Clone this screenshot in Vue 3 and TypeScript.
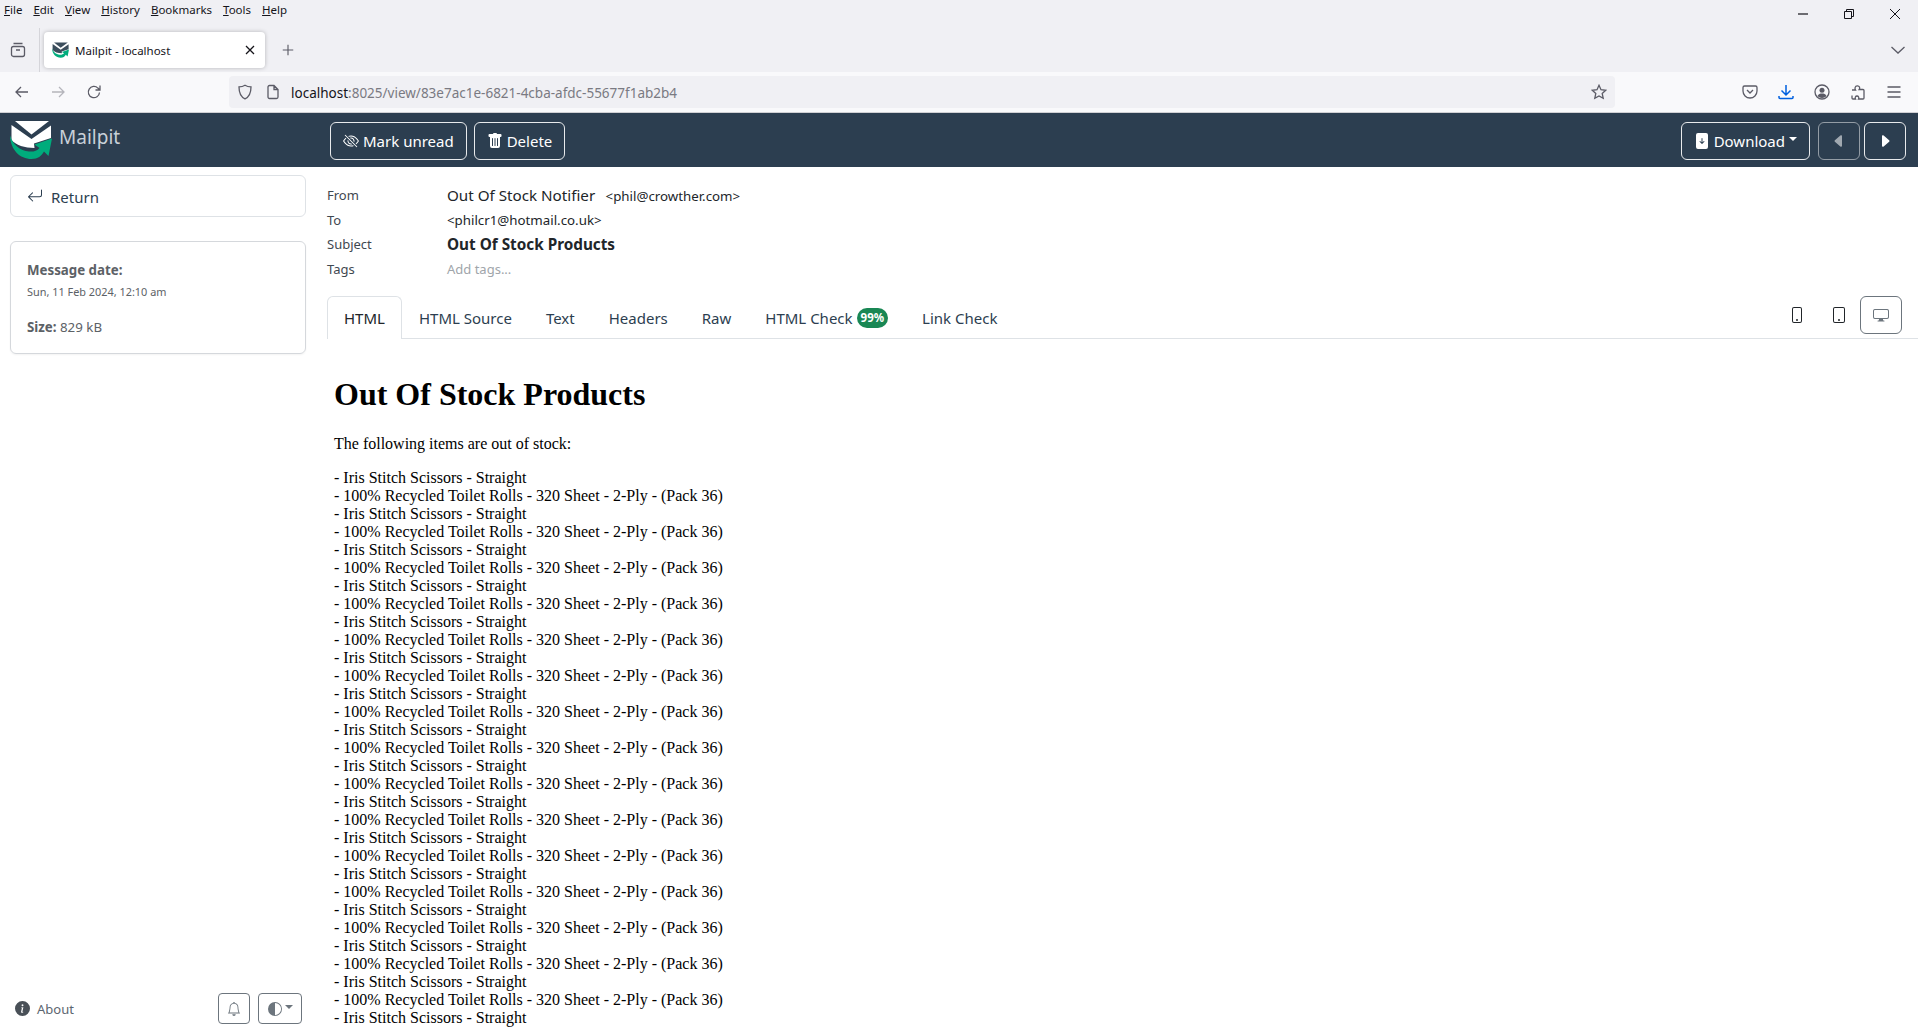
<template>
  <div class="page">
    <!-- browser chrome -->
    <div class="browser">
      <div class="menu-row">
        <nav class="menu">
          <span v-for="m in menus" :key="m.rest"><u>{{ m.key }}</u>{{ m.rest }}</span>
        </nav>
        <div class="win-ctrl">
          <svg viewBox="0 0 12 12"><path d="M1 6h10" stroke-width="1.2"/></svg>
          <svg viewBox="0 0 12 12"><path d="M1.5 3.5h7v7h-7zM3.5 3.5v-2h7v7h-2"/></svg>
          <svg viewBox="0 0 12 12"><path d="M1 1l10 10M11 1L1 11"/></svg>
        </div>
      </div>
      <div class="tab-row">
        <button class="chrome-icon first" type="button" aria-label="Firefox View">
          <svg viewBox="0 0 16 16"><rect x="1.5" y="4.5" width="13" height="10" rx="2"/><path d="M3.5 1.5h9M6 8h4"/></svg>
        </button>
        <div class="tab-sep"></div>
        <div class="tab">
          <svg class="favicon" viewBox="5 5 42 42"><use href="#mp-logo"/></svg>
          <span class="tab-title">Mailpit - localhost</span>
          <svg class="tab-close" viewBox="0 0 12 12"><path d="M2 2l8 8M10 2l-8 8"/></svg>
        </div>
        <svg class="new-tab" viewBox="0 0 16 16"><path d="M8 2v12M2 8h12"/></svg>
        <svg class="all-tabs" viewBox="0 0 16 16"><path d="M1.5 5l6.5 6 6.5-6"/></svg>
      </div>
      <div class="nav-row">
        <div class="nav-left">
          <svg viewBox="0 0 16 16"><path d="M14 8H2.5M7 3L2 8l5 5"/></svg>
          <svg class="off" viewBox="0 0 16 16"><path d="M2 8h11.5M9 3l5 5-5 5"/></svg>
          <svg viewBox="0 0 16 16"><path d="M13.5 8.5a5.6 5.6 0 1 1-1.6-4.4L14 6M14 1.5V6H9.5"/></svg>
        </div>
        <div class="url-bar">
          <svg class="shield" viewBox="0 0 16 16"><path d="M8 1.2c2 1.2 3.9 1.6 6 1.7 0 6-1.6 9.800-6 11.900C3.600 12.700 2 8.900 2 2.900c2.100-.1 4-.5 6-1.700z"/></svg>
          <svg class="page-ic" viewBox="0 0 16 16"><path d="M3 3a1.500 1.500 0 0 1 1.500-1.500H9L13 5.500V13a1.500 1.500 0 0 1-1.500 1.500h-7A1.500 1.500 0 0 1 3 13zM9 1.500v4h4"/></svg>
          <span class="url"><span class="host">localhost</span>:8025/view/83e7ac1e-6821-4cba-afdc-55677f1ab2b4</span>
          <svg class="star" viewBox="0 0 16 16"><path d="M8 1.300l2 4.400 4.700.6-3.500 3.200 1 4.800L8 11.900l-4.200 2.400 1-4.800-3.500-3.200 4.700-.6z"/></svg>
        </div>
        <div class="nav-right">
          <svg viewBox="0 0 16 16"><path d="M2.500 2h11A1.500 1.500 0 0 1 15 3.500V7a7 7 0 0 1-14 0V3.500A1.500 1.500 0 0 1 2.500 2zM5 6l3 3 3-3"/></svg>
          <svg class="dl" viewBox="0 0 16 16"><path d="M8 1v10M3.500 6.500L8 11l4.500-4.500M1 12v1.500a1 1 0 0 0 1 1h12a1 1 0 0 0 1-1V12"/></svg>
          <svg viewBox="0 0 16 16"><circle cx="8" cy="8" r="7"/><circle class="solid" cx="8" cy="6.300" r="2.500"/><path class="solid" d="M3.500 12c1-2 2.500-2.500 4.500-2.500s3.500.5 4.500 2.500c-1.200 1.300-2.700 2-4.500 2s-3.300-.7-4.500-2z"/></svg>
          <svg viewBox="0 0 16 16"><path d="M2 6h3.500c-1-1.500-.5-4 1.700-4.200C9.500 1.600 10.300 4 9.200 5.500H13a1 1 0 0 1 1 1V14a1 1 0 0 1-1 1H8.500c.8-1.500 0-3-1.500-3s-2.300 1.500-1.500 3H3a1 1 0 0 1-1-1v-2.500"/></svg>
          <svg viewBox="0 0 16 16"><path d="M1.500 3h13M1.500 8h13M1.500 13h13"/></svg>
        </div>
      </div>
    </div>

    <!-- shared logo -->
    <svg class="defs" aria-hidden="true">
      <defs>
        <g id="mp-logo">
          <path d="M10 6H44L26.500 19.500z" fill="currentColor"/>
          <path d="M6.500 10L26.500 24 46 10.500V23L29 28.500 29.500 33C20 33 10.500 30 6.500 25z" fill="currentColor"/>
          <path d="M5 20.500C5.500 35 15 44 26.500 44 33 44 36.500 41 39 36.500L43.500 41 47 23.500 29.500 29.500 34.500 33C32 36 28 37 24 36.500 15 36 7.500 29 5 20.500z" fill="#00ac7c"/>
        </g>
      </defs>
    </svg>

    <!-- app navbar -->
    <header class="navbar">
      <div class="brand">
        <svg class="brand-logo" viewBox="0 0 50 50"><use href="#mp-logo"/></svg>
        <span class="brand-name">Mailpit</span>
      </div>
      <div class="nav-actions">
        <button class="btn-outline" type="button">
          <svg viewBox="0 0 16 16" fill="currentColor"><path d="M13.359 11.238C15.060 9.720 16 8 16 8s-3-5.500-8-5.500a7.028 7.028 0 0 0-2.790.588l.770.771A5.944 5.944 0 0 1 8 3.500c2.120 0 3.879 1.168 5.168 2.457A13.134 13.134 0 0 1 14.828 8c-.058.087-.122.183-.195.288-.335.480-.830 1.120-1.465 1.755-.165.165-.337.328-.517.486l.708.709z"/><path d="M11.297 9.176a3.500 3.500 0 0 0-4.474-4.474l.823.823a2.500 2.500 0 0 1 2.829 2.829l.822.822zm-2.943 1.299.822.822a3.500 3.500 0 0 1-4.474-4.474l.823.823a2.500 2.500 0 0 0 2.829 2.829z"/><path d="M3.350 5.470c-.180.160-.353.322-.518.487A13.134 13.134 0 0 0 1.172 8l.195.288c.335.480.830 1.120 1.465 1.755C4.121 11.332 5.881 12.500 8 12.500c.716 0 1.390-.133 2.020-.360l.770.772A7.029 7.029 0 0 1 8 13.500C3 13.500 0 8 0 8s.939-1.721 2.641-3.238l.708.709zm10.296 8.884-12-12 .708-.708 12 12-.708.708z"/></svg>
          Mark unread
        </button>
        <button class="btn-outline" type="button">
          <svg viewBox="0 0 16 16" fill="currentColor"><path d="M2.500 1a1 1 0 0 0-1 1v1a1 1 0 0 0 1 1H3v9a2 2 0 0 0 2 2h6a2 2 0 0 0 2-2V4h.5a1 1 0 0 0 1-1V2a1 1 0 0 0-1-1H10a1 1 0 0 0-1-1H7a1 1 0 0 0-1 1H2.500zm3 4a.5.5 0 0 1 .5.5v7a.5.5 0 0 1-1 0v-7a.5.5 0 0 1 .5-.5zM8 5a.5.5 0 0 1 .5.5v7a.5.5 0 0 1-1 0v-7A.5.5 0 0 1 8 5zm3 .5v7a.5.5 0 0 1-1 0v-7a.5.5 0 0 1 1 0z"/></svg>
          Delete
        </button>
      </div>
      <div class="nav-end">
        <button class="btn-outline download" type="button">
          <svg viewBox="0 0 16 16" fill="currentColor"><path d="M12 0H4a2 2 0 0 0-2 2v12a2 2 0 0 0 2 2h8a2 2 0 0 0 2-2V2a2 2 0 0 0-2-2zM8 5a.5.5 0 0 1 .5.5v3.793l1.146-1.147a.5.5 0 0 1 .708.708l-2 2a.5.5 0 0 1-.708 0l-2-2a.5.5 0 1 1 .708-.708L7.500 9.293V5.500A.5.5 0 0 1 8 5z"/></svg>
          Download<i class="caret"></i>
        </button>
        <button class="btn-outline square dim" type="button" aria-label="Previous">
          <svg viewBox="0 0 16 16" fill="currentColor"><path d="m3.860 8.753 5.482 4.796c.646.566 1.658.106 1.658-.753V3.204a1 1 0 0 0-1.659-.753l-5.480 4.796a1 1 0 0 0 0 1.506z"/></svg>
        </button>
        <button class="btn-outline square" type="button" aria-label="Next">
          <svg viewBox="0 0 16 16" fill="currentColor"><path d="m12.140 8.753-5.482 4.796c-.646.566-1.658.106-1.658-.753V3.204a1 1 0 0 1 1.659-.753l5.480 4.796a1 1 0 0 1 0 1.506z"/></svg>
        </button>
      </div>
    </header>

    <div class="body">
      <aside class="sidebar">
        <button class="return-btn" type="button">
          <svg viewBox="0 0 16 16" fill="currentColor"><path fill-rule="evenodd" d="M14.500 1.500a.5.5 0 0 1 .5.5v4.800a2.500 2.500 0 0 1-2.500 2.500H2.707l3.347 3.346a.5.5 0 0 1-.708.708l-4.200-4.200a.5.5 0 0 1 0-.708l4-4a.5.5 0 1 1 .708.708L2.707 8.300H12.500A1.500 1.500 0 0 0 14 6.800V2a.5.5 0 0 1 .5-.5z"/></svg>
          <span class="return-label">Return</span>
        </button>
        <div class="info-card">
          <div class="info-title">Message date:</div>
          <div class="info-date">Sun, 11 Feb 2024, 12:10 am</div>
          <div class="info-size"><b>Size:</b> 829 kB</div>
        </div>
        <div class="side-foot">
          <a class="about">
            <svg viewBox="0 0 16 16" fill="currentColor"><path d="M8 16A8 8 0 1 0 8 0a8 8 0 0 0 0 16zm.93-9.412-1 4.705c-.07.34.029.533.304.533.194 0 .487-.07.686-.246l-.088.416c-.287.346-.92.598-1.465.598-.703 0-1.002-.422-.808-1.319l.738-3.468c.064-.293.006-.399-.287-.47l-.451-.081.082-.381 2.290-.287zM8 5.500a1 1 0 1 1 0-2 1 1 0 0 1 0 2z"/></svg>
            About
          </a>
          <div class="foot-btns">
            <button class="foot-btn" type="button" aria-label="Notifications">
              <svg viewBox="0 0 16 16" fill="currentColor"><path d="M8 16a2 2 0 0 0 2-2H6a2 2 0 0 0 2 2zM8 1.918l-.797.161A4.002 4.002 0 0 0 4 6c0 .628-.134 2.197-.459 3.742-.16.767-.376 1.566-.663 2.258h10.244c-.287-.692-.502-1.49-.663-2.258C12.134 8.197 12 6.628 12 6a4.002 4.002 0 0 0-3.203-3.92L8 1.917zM14.220 12c.223.447.481.801.78 1H1c.299-.199.557-.553.78-1C2.680 10.200 3 6.880 3 6c0-2.420 1.720-4.440 4.005-4.901a1 1 0 1 1 1.990 0A5.002 5.002 0 0 1 13 6c0 .88.32 4.200 1.220 6z"/></svg>
            </button>
            <button class="foot-btn theme" type="button" aria-label="Theme">
              <svg viewBox="0 0 16 16" fill="currentColor"><path d="M8 15A7 7 0 1 0 8 1v14zm0 1A8 8 0 1 1 8 0a8 8 0 0 1 0 16z"/></svg>
              <i class="caret"></i>
            </button>
          </div>
        </div>
      </aside>

      <main class="message">
        <div class="meta">
          <div class="meta-label">From</div>
          <div class="meta-value"><span class="from-name">Out Of Stock Notifier</span> <span class="addr">&lt;phil@crowther.com&gt;</span></div>
          <div class="meta-label">To</div>
          <div class="meta-value"><span class="addr">&lt;philcr1@hotmail.co.uk&gt;</span></div>
          <div class="meta-label">Subject</div>
          <div class="meta-value subject">Out Of Stock Products</div>
          <div class="meta-label">Tags</div>
          <div class="meta-value tags">Add tags...</div>
        </div>

        <div class="tabs">
          <button
            v-for="t in tabs"
            :key="t.label"
            class="tab-link"
            :class="{ active: t.label === 'HTML' }"
            type="button"
          >{{ t.label }}<span v-if="t.badge" class="badge">{{ t.badge }}</span></button>
          <div class="devices">
            <button class="device" type="button" aria-label="Phone">
              <svg viewBox="0 0 16 16" fill="currentColor"><path d="M11 1a1 1 0 0 1 1 1v12a1 1 0 0 1-1 1H5a1 1 0 0 1-1-1V2a1 1 0 0 1 1-1h6zM5 0a2 2 0 0 0-2 2v12a2 2 0 0 0 2 2h6a2 2 0 0 0 2-2V2a2 2 0 0 0-2-2H5z"/><path d="M8 14a1 1 0 1 0 0-2 1 1 0 0 0 0 2z"/></svg>
            </button>
            <button class="device" type="button" aria-label="Tablet">
              <svg viewBox="0 0 16 16" fill="currentColor"><path d="M12 1a1 1 0 0 1 1 1v12a1 1 0 0 1-1 1H4a1 1 0 0 1-1-1V2a1 1 0 0 1 1-1h8zM4 0a2 2 0 0 0-2 2v12a2 2 0 0 0 2 2h8a2 2 0 0 0 2-2V2a2 2 0 0 0-2-2H4z"/><path d="M8 14a1 1 0 1 0 0-2 1 1 0 0 0 0 2z"/></svg>
            </button>
            <button class="device on" type="button" aria-label="Desktop">
              <svg viewBox="0 0 16 16" fill="currentColor"><path d="M0 4s0-2 2-2h12s2 0 2 2v6s0 2-2 2h-4c0 .667.083 1.167.25 1.500H11a.5.5 0 0 1 0 1H5a.5.5 0 0 1 0-1h.75c.167-.333.25-.833.25-1.500H2s-2 0-2-2V4zm1.398-.855a.758.758 0 0 0-.254.302A1.460 1.460 0 0 0 1 4.010V10c0 .325.078.502.145.602.07.105.17.188.302.254a1.464 1.464 0 0 0 .538.143L2.010 11H14c.325 0 .502-.078.602-.145a.758.758 0 0 0 .254-.302 1.464 1.464 0 0 0 .143-.538L15 9.990V4c0-.325-.078-.502-.145-.602a.757.757 0 0 0-.302-.254A1.460 1.460 0 0 0 13.990 3H2c-.325 0-.502.078-.602.145z"/></svg>
            </button>
          </div>
        </div>

        <article class="mail">
          <h1>Out Of Stock Products</h1>
          <p>The following items are out of stock:</p>
          <p>
            <template v-for="(line, i) in lines" :key="i">{{ line }}<br /></template>
          </p>
        </article>
      </main>
    </div>
  </div>
</template>

<script setup lang="ts">
const menus = [
  { key: 'F', rest: 'ile' },
  { key: 'E', rest: 'dit' },
  { key: 'V', rest: 'iew' },
  { key: 'H', rest: 'istory' },
  { key: 'B', rest: 'ookmarks' },
  { key: 'T', rest: 'ools' },
  { key: 'H', rest: 'elp' },
]

const tabs: { label: string; badge?: string }[] = [
  { label: 'HTML' },
  { label: 'HTML Source' },
  { label: 'Text' },
  { label: 'Headers' },
  { label: 'Raw' },
  { label: 'HTML Check', badge: '99%' },
  { label: 'Link Check' },
]

const lines = Array.from({ length: 31 }, (_, i) =>
  i % 2 === 0
    ? '- Iris Stitch Scissors - Straight'
    : '- 100% Recycled Toilet Rolls - 320 Sheet - 2-Ply - (Pack 36)',
)
</script>

<style>
html, body { margin: 0; height: 100%; overflow: hidden; background: #fff; }
</style>

<style scoped>
.page {
  height: 100vh;
  display: flex;
  flex-direction: column;
  overflow: hidden;
  font-family: "Noto Sans", "Open Sans", sans-serif;
  color: #212529;
}
button { font-family: inherit; }
.defs { width: 0; height: 0; position: absolute; }

/* browser chrome */
.browser { background: #f0f0f4; color: #15141a; flex: none; }
.browser svg { fill: none; stroke: #5b5b66; stroke-width: 1.3; }
.menu-row { height: 28px; display: flex; justify-content: space-between; }
.menu { display: flex; gap: 11px; padding: 2px 0 0 4px; font-size: 11.500px; line-height: 16px; }
.win-ctrl { display: flex; gap: 34px; padding: 8px 17px 0 0; }
.browser .win-ctrl svg { width: 12px; height: 12px; stroke: #15141a; stroke-width: 1; }
.tab-row { height: 44px; display: flex; align-items: center; position: relative; }
.chrome-icon { width: 36px; height: 36px; margin-left: 0; background: none; border: 0; padding: 0; display: flex; align-items: center; justify-content: center; }
.chrome-icon svg { width: 16px; height: 16px; }
.tab-sep { width: 1px; height: 44px; background: #d5d5da; margin: 0 4px 0 3px; }
.tab {
  width: 221px;
  height: 36px;
  background: #fff;
  border-radius: 4px;
  box-shadow: 0 0 4px rgba(0, 0, 0, .25);
  display: flex;
  align-items: center;
  padding: 0 9px 0 8px;
  box-sizing: border-box;
  font-size: 11.500px;
}
.browser .tab svg.favicon { width: 17px; height: 17px; margin-right: 6px; stroke: none; color: #3b4d5c; }
.tab-title { flex: 1; white-space: nowrap; }
.browser .tab-close { width: 12px; height: 12px; stroke: #15141a; }
.browser .new-tab { width: 14px; height: 14px; margin-left: 16px; }
.browser .all-tabs { width: 16px; height: 16px; position: absolute; right: 12px; top: 14px; }
.nav-row { height: 41px; background: #f9f9fb; display: flex; align-items: center; border-bottom: 1px solid #d0d0d4; box-sizing: border-box; }
.nav-left { width: 229px; display: flex; gap: 20px; padding-left: 14px; box-sizing: border-box; }
.nav-left svg, .nav-right svg { width: 16px; height: 16px; }
.browser .off { stroke: #b5b5bb; }
.url-bar {
  width: 1386px;
  height: 32px;
  background: #f0f0f4;
  border-radius: 4px;
  display: flex;
  align-items: center;
  padding: 0 8px;
  box-sizing: border-box;
}
.shield, .page-ic, .star { width: 16px; height: 16px; flex: none; }
.page-ic { margin-left: 12px; }
.url { margin-left: 10px; margin-top: 1px; flex: 1; font-size: 13.500px; color: #7a7a82; white-space: nowrap; }
.host { color: #15141a; }
.nav-right { flex: 1; display: flex; justify-content: flex-end; gap: 20px; padding-right: 16px; }
.browser .nav-right .dl { stroke: #0060df; stroke-width: 1.500; }
.browser .solid { fill: #5b5b66; stroke: none; }

/* app navbar */
.navbar {
  flex: none;
  height: 54px;
  background: #2c3e50;
  display: flex;
  align-items: center;
  box-sizing: border-box;
  padding-right: 12px;
}
.brand { width: 330px; display: flex; align-items: center; padding-left: 5px; box-sizing: border-box; color: #c8d0d8; }
.brand-logo { width: 50px; height: 50px; margin-right: 4px; color: #fff; }
.brand-name { font-size: 19px; margin-top: -6px; }
.nav-actions { display: flex; gap: 7px; margin-top: 1px; }
.nav-end { margin-left: auto; display: flex; gap: 8px; margin-top: 1px; }
.btn-outline {
  height: 38px;
  padding: 0 12px;
  background: transparent;
  border: 1px solid #e8eaec;
  border-radius: 6px;
  color: #fff;
  font-size: 15px;
  display: flex;
  align-items: center;
  gap: 4px;
  box-sizing: border-box;
  white-space: nowrap;
}
.btn-outline svg { width: 16px; height: 16px; flex: none; }
.btn-outline.square { width: 42px; justify-content: center; padding: 0; }
.btn-outline.dim { opacity: .55; }
.nav-end .square { margin-left: -4px; }
.nav-end .square.dim { margin-left: 0; }
.caret {
  display: inline-block;
  width: 0;
  height: 0;
  margin-bottom: 3px;
  border-top: 4.800px solid currentColor;
  border-left: 4.800px solid transparent;
  border-right: 4.800px solid transparent;
}

/* layout */
.body { flex: 1; min-height: 0; display: flex; }
.sidebar {
  width: 327px;
  flex: none;
  box-sizing: border-box;
  padding: 8px 21px 6px 10px;
  display: flex;
  flex-direction: column;
}
.return-btn {
  height: 42px;
  background: #fff;
  border: 1px solid #dee2e6;
  border-radius: 6px;
  display: flex;
  align-items: center;
  gap: 8px;
  padding: 0 16px;
  font-size: 15px;
  color: #2c3e50;
  flex: none;
}
.return-btn svg { width: 16px; height: 16px; }
.return-label { padding-top: 2px; }
.info-card {
  margin-top: 24px;
  height: 113px;
  box-sizing: border-box;
  border: 1px solid #d5d8dc;
  border-radius: 6px;
  padding: 18px 16px;
  font-size: 13.300px;
  color: #5c6166;
  box-shadow: 0 1px 2px rgba(0, 0, 0, .05);
}
.info-title { font-weight: 700; line-height: 20px; }
.info-date { font-size: 10.900px; line-height: 18px; margin-top: 3px; }
.info-size { margin-top: 16px; line-height: 20px; }
.side-foot { margin-top: auto; margin-right: 4px; display: flex; align-items: center; justify-content: space-between; padding-left: 5px; }
.about { display: flex; align-items: center; gap: 7px; font-size: 13px; color: #5c6670; }
.about svg { width: 15px; height: 15px; color: #495057; }
.foot-btns { display: flex; gap: 8px; }
.foot-btn {
  height: 31px;
  width: 32px;
  background: #fff;
  border: 1px solid #6c757d;
  border-radius: 4px;
  color: #6c757d;
  display: flex;
  align-items: center;
  justify-content: center;
  padding: 0;
  box-sizing: border-box;
}
.foot-btn svg { width: 14px; height: 14px; }
.foot-btn.theme { width: 44px; }
.foot-btn.theme .caret { margin-left: 3px; }

.message { flex: 1; min-width: 0; display: flex; flex-direction: column; }
.meta {
  display: grid;
  grid-template-columns: 120px 1fr;
  padding-top: 16px;
  font-size: 13px;
  grid-auto-rows: 24.500px;
  line-height: 24.500px;
  color: #212529;
}
.meta-label { color: #3f4851; }
.from-name { font-size: 15.200px; }
.addr { font-size: 13.300px; margin-left: 7px; }
.meta-value > .addr:first-child { margin-left: 0; }
.subject { font-weight: 700; font-size: 15.300px; }
.tags { color: #a0a5aa; }

.tabs {
  margin-top: 15px;
  height: 43px;
  display: flex;
  align-items: stretch;
  border-bottom: 1px solid #dee2e6;
  box-sizing: border-box;
}
.tab-link {
  background: none;
  border: 1px solid transparent;
  border-bottom: 0;
  padding: 0 16px;
  font-size: 15px;
  color: #2c3e50;
  white-space: nowrap;
  display: flex;
  align-items: center;
}
.tab-link.active {
  color: #212529;
  border-color: #dee2e6;
  border-radius: 6px 6px 0 0;
  background: #fff;
  margin-bottom: -1px;
}
.badge {
  background: #198754;
  color: #fff;
  font-size: 11.500px;
  font-weight: 700;
  padding: 2px 4px;
  border-radius: 10px;
  margin-left: 4px;
  line-height: 16px;
}
.devices { margin-left: auto; display: flex; align-items: flex-start; padding-right: 16px; }
.device {
  width: 42px;
  height: 38px;
  background: none;
  border: 1px solid transparent;
  border-radius: 6px;
  padding: 0;
  color: #212529;
  display: flex;
  align-items: center;
  justify-content: center;
}
.device svg { width: 16px; height: 16px; }
.device.on { border-color: #6c757d; color: #6c757d; }

.mail {
  flex: 1;
  overflow: hidden;
  padding: 16px 7px 0;
  font-family: "Liberation Serif", serif;
  font-size: 16px;
  color: #000;
}
.mail h1 { font-size: 32px; margin: 21px 0 22px; line-height: 37px; }
.mail p { margin: 16px 0; line-height: 18px; }
</style>
